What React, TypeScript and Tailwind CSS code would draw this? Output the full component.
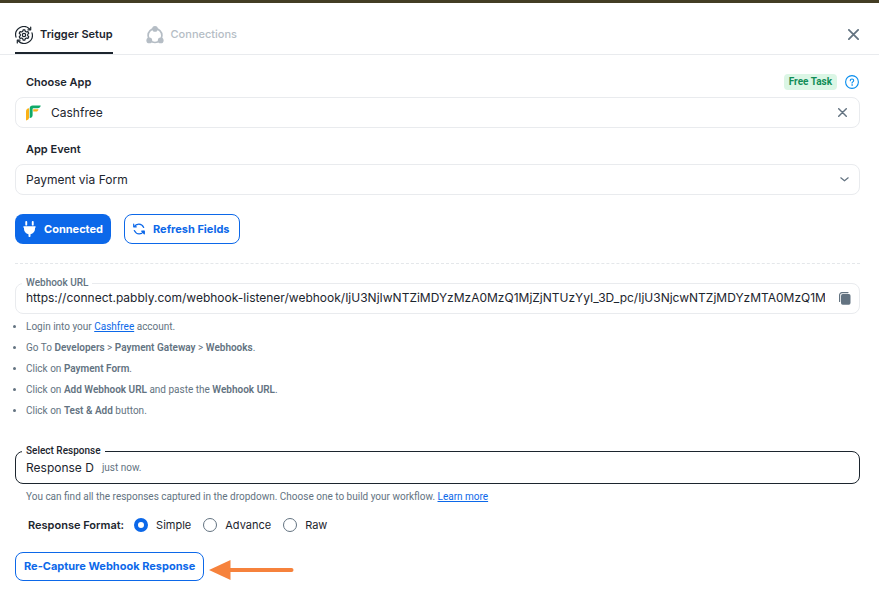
import { useState, type ReactNode } from "react"
import clsx from "clsx"

const WEBHOOK_URL =
  "https://connect.pabbly.com/webhook-listener/webhook/IjU3NjIwNTZiMDYzMzA0MzQ1MjZjNTUzYyI_3D_pc/IjU3NjcwNTZjMDYzMTA0MzQ1MjZkNTUzYyI_3D_pc"

const FORMATS = ["Simple", "Advance", "Raw"]

function TriggerIcon() {
  return (
    <svg viewBox="0 0 18 18" className="size-[18px]" fill="none" stroke="currentColor" strokeWidth="1.2" strokeLinecap="round" strokeLinejoin="round" aria-hidden="true">
      <path d="M1 11.2A8.2 8.2 0 0 1 14.6 3" />
      <path d="M17 6.8A8.2 8.2 0 0 1 3.4 15" />
      <path d="M15.7 1v2.8h-2.8" />
      <path d="M2.3 17v-2.8h2.8" />
      <path d="M8.1 3.9h1.8l.4 1.5 1.1.6 1.5-.4.9 1.6-1.1 1.1v1.4l1.1 1.1-.9 1.6-1.5-.4-1.1.6-.4 1.5H8.1l-.4-1.5-1.1-.6-1.5.4-.9-1.6 1.1-1.1V8.3L4.2 7.2l.9-1.6 1.5.4 1.1-.6z" />
      <circle cx="9" cy="9" r="1.7" />
    </svg>
  )
}

function ConnectionsIcon() {
  return (
    <svg viewBox="0 0 18 18" className="size-[18px]" fill="currentColor" aria-hidden="true">
      <circle cx="9" cy="9.6" r="6.9" fill="none" stroke="currentColor" strokeWidth="1.7" />
      <circle cx="9" cy="2.9" r="2.8" />
      <circle cx="3.3" cy="14.4" r="2.9" />
      <circle cx="14.7" cy="14.4" r="2.9" />
    </svg>
  )
}

function CrossIcon({ className }: { className: string }) {
  return (
    <svg viewBox="0 0 10 10" className={className} fill="none" stroke="currentColor" strokeWidth="1.6" strokeLinecap="round" aria-hidden="true">
      <path d="M.8.8l8.4 8.4M9.2.8L.8 9.2" />
    </svg>
  )
}

function CashfreeLogo() {
  return (
    <svg viewBox="0 0 15 16" className="h-4 w-[15px] shrink-0" aria-hidden="true">
      <path d="M3 3.3v9.2c0 1.6-1 2.7-3 2.9V6.6C0 4.7 1 3.5 3 3.3z" fill="#fbb117" />
      <path d="M7.2 4.3h5.3c-.3 1.5-1.2 2.3-2.7 2.3H7.2z" fill="#fbb117" />
      <path d="M14.7.5c-.3 1.9-1.3 2.7-3 2.7H7.3c-.5 0-.7.2-.7.7v6.3c0 1.6-1 2.5-2.9 2.8V3.5c0-2 1.1-3 3-3z" fill="#0fa968" />
    </svg>
  )
}

function PlugIcon() {
  return (
    <svg viewBox="0 0 13 16" className="h-4 w-[13px]" fill="currentColor" aria-hidden="true">
      <rect x="2.3" y="0" width="1.9" height="4.6" rx=".9" />
      <rect x="8.8" y="0" width="1.9" height="4.6" rx=".9" />
      <path d="M1 5.3h11c.5 0 .8.3.8.7s-.3.8-.8.8v1.3c0 2.6-1.7 4.6-4.5 5.2V15c0 .6-.4 1-1 1s-1-.4-1-1v-1.7C2.7 12.7 1 10.7 1 8.1V6.8C.5 6.8.2 6.4.2 6s.3-.7.8-.7z" />
    </svg>
  )
}

function RefreshIcon() {
  return (
    <svg viewBox="0 0 12 12" className="size-3" fill="none" stroke="currentColor" strokeWidth="1.2" strokeLinecap="round" strokeLinejoin="round" aria-hidden="true">
      <path d="M.7 1.2v2.6h2.6M1.2 3.7C3 .7 8.300-.6 10.700 4.400" />
      <path d="M10.800 8.300C9 11.300 3.700 12.600 1.300 7.600" />
      <path d="M11.300 10.800V8.200H8.700z" fill="currentColor" />
    </svg>
  )
}

function HelpIcon() {
  return (
    <svg viewBox="0 0 14 14" className="size-3.5" fill="none" stroke="currentColor" strokeLinecap="round" aria-hidden="true">
      <circle cx="7" cy="7" r="6.4" strokeWidth="1.1" />
      <path d="M5.3 5.7c0-1 .7-1.7 1.7-1.7s1.7.7 1.7 1.6c0 1.3-1.7 1.3-1.7 2.5" strokeWidth="1.1" />
      <circle cx="7" cy="10" r=".3" strokeWidth=".8" />
    </svg>
  )
}

function CopyIcon() {
  return (
    <svg viewBox="0 0 12 13" className="h-[13px] w-3" aria-hidden="true">
      <path d="M.6 9.5V3A2.4 2.4 0 0 1 3 .6h6" fill="none" stroke="currentColor" strokeWidth="1.2" strokeLinecap="round" />
      <rect x="2" y="2" width="9.5" height="10.8" rx="1.7" fill="currentColor" />
    </svg>
  )
}

function Notched({ legend, active, children }: { legend: ReactNode; active?: boolean; children: ReactNode }) {
  return (
    <fieldset className={clsx("min-w-0 rounded-lg border pl-1.5", active ? "border-[#1c252e]" : "border-[#e9ebee]")}>
      <legend className={clsx("px-1 font-['Roboto',sans-serif] text-[10px] leading-3 font-medium", active ? "text-[#1c252e]" : "text-[#637381]")}>
        {legend}
      </legend>
      {children}
    </fieldset>
  )
}

export default function App() {
  const [app, setApp] = useState("Cashfree")
  const [format, setFormat] = useState("Simple")

  return (
    <div className="bg-white font-['Inter','Liberation_Sans',sans-serif] text-xs text-[#1c252e]">
      <header className="flex h-[55px] items-stretch justify-between border-t-[3px] border-b border-t-[#433d24] border-b-[#e9ebee] pr-5 pl-[15px]">
        <nav className="flex gap-[33px]">
          <button type="button" className="flex items-center gap-[7px] border-b-2 border-[#1c252e] pt-3.5 text-[11px] font-semibold">
            <TriggerIcon />
            Trigger Setup
          </button>
          <button type="button" className="flex items-center gap-[7px] border-b-2 border-transparent pt-3.5 text-[11px] font-medium text-[#b5bdc5]">
            <ConnectionsIcon />
            Connections
          </button>
        </nav>
        <button type="button" aria-label="Close" className="pt-3 text-[#637381]">
          <CrossIcon className="size-[11px]" />
        </button>
      </header>

      <main className="pt-[18px] pr-[19px] pb-2 pl-[15px]">
        <div className="flex h-[18px] items-center justify-between pr-px pl-[11px]">
          <label htmlFor="app" className="text-[11px] font-semibold">
            Choose App
          </label>
          <div className="flex items-center gap-2">
            <span className="rounded-sm bg-[#dbf6e5] px-[5px] font-['Roboto',sans-serif] text-[10px] leading-4 font-bold text-[#118d57]">
              Free Task
            </span>
            <button type="button" aria-label="Help" className="text-[#078dee]">
              <HelpIcon />
            </button>
          </div>
        </div>
        <div className="mt-1.5 flex h-[31px] items-center gap-2.5 rounded-lg border border-[#e9ebee] pr-3 pl-2.5">
          <CashfreeLogo />
          <input
            id="app"
            value={app}
            onChange={(event) => setApp(event.target.value)}
            className="min-w-0 flex-1 outline-none"
          />
          <button type="button" aria-label="Clear" onClick={() => setApp("")} className="text-[#637381]">
            <CrossIcon className="size-[9px]" />
          </button>
        </div>

        <label htmlFor="event" className="mt-[11px] block pl-[11px] text-[11px] leading-5 font-semibold">
          App Event
        </label>
        <div className="mt-[5px] grid h-[31px] items-center rounded-lg border border-[#e9ebee]">
          <select id="event" className="col-start-1 row-start-1 h-full w-full appearance-none pl-2.5 outline-none">
            <option>Payment via Form</option>
          </select>
          <svg viewBox="0 0 9 5" className="pointer-events-none col-start-1 row-start-1 mr-2.5 h-[5px] w-[9px] justify-self-end text-[#637381]" fill="none" stroke="currentColor" strokeWidth="1.2" strokeLinecap="round" strokeLinejoin="round" aria-hidden="true">
            <path d="M.8.8l3.7 3 3.7-3" />
          </svg>
        </div>

        <div className="mt-[19px] flex gap-[13px] text-[11px] font-bold">
          <button type="button" className="flex h-[30px] items-center gap-2 rounded-lg bg-[#0c68e9] px-2 text-white">
            <PlugIcon />
            Connected
          </button>
          <button type="button" className="flex h-[30px] items-center gap-2 rounded-lg border border-[#0c68e9] pr-2.5 pl-2 text-[#0c68e9]">
            <RefreshIcon />
            Refresh Fields
          </button>
        </div>

        <hr className="mt-[19px] mb-[13px] border-dashed border-[#e4e7ea]" />

        <Notched legend={<label htmlFor="url">Webhook URL</label>}>
          <div className="flex h-6 items-center gap-3.5 pr-2 pb-1.5 pl-1">
            <input id="url" readOnly value={WEBHOOK_URL} className="min-w-0 flex-1 outline-none" />
            <button type="button" aria-label="Copy" className="text-[#637381]">
              <CopyIcon />
            </button>
          </div>
        </Notched>

        <ul className="mt-[2px] list-outside list-disc pl-[11px] font-['Roboto',sans-serif] text-[10px] leading-[21px] text-[#637381]">
          <li>
            Login into your{" "}
            <a href="#cashfree" className="text-[#0c68e9] underline">
              Cashfree
            </a>{" "}
            account.
          </li>
          <li>
            Go To <b className="font-semibold">Developers</b> &gt; <b className="font-semibold">Payment Gateway</b> &gt;{" "}
            <b className="font-semibold">Webhooks</b>.
          </li>
          <li>
            Click on <b className="font-semibold">Payment Form</b>.
          </li>
          <li>
            Click on <b className="font-semibold">Add Webhook URL</b> and paste the{" "}
            <b className="font-semibold">Webhook URL</b>.
          </li>
          <li>
            Click on <b className="font-semibold">Test &amp; Add</b> button.
          </li>
        </ul>

        <div className="mt-6">
          <Notched active legend={<span id="response-label">Select Response</span>}>
            <button
              type="button"
              aria-haspopup="listbox"
              aria-labelledby="response-label"
              className="flex h-[26px] w-full items-center gap-2 pb-[5px] pl-1 text-left"
            >
              Response D
              <span className="font-['Roboto',sans-serif] text-[10px] text-[#637381]">just now.</span>
            </button>
          </Notched>
        </div>
        <p className="mt-[5px] pl-[11px] font-['Roboto',sans-serif] text-[10px] leading-4 text-[#637381]">
          You can find all the responses captured in the dropdown. Choose one to build your workflow.{" "}
          <a href="#learn" className="text-[#0c68e9] underline">
            Learn more
          </a>
        </p>

        <div role="radiogroup" aria-labelledby="format-label" className="mt-2.5 flex h-5 items-center pl-[13px] text-[11px]">
          <span id="format-label" className="mr-2.5 font-semibold">
            Response Format:
          </span>
          {FORMATS.map((name) => (
            <label key={name} className="mr-3 flex items-center gap-2">
              <input
                type="radio"
                name="format"
                checked={format === name}
                onChange={() => setFormat(name)}
                className="size-3.5 appearance-none rounded-full border border-[#637381] checked:border-4 checked:border-[#0c68e9]"
              />
              {name}
            </label>
          ))}
        </div>

        <div className="mt-[17px] flex items-center gap-[5px]">
          <button type="button" className="h-[29px] rounded-lg border border-[#0c68e9] px-2 text-[11px] font-bold text-[#0c68e9]">
            Re-Capture Webhook Response
          </button>
          <svg viewBox="0 0 86 20" className="mt-1.5 h-5 w-[86px]" aria-hidden="true">
            <path d="M0 10L21.5 0v20z" fill="#f6823c" />
            <path d="M20 10h62.5" stroke="#f6823c" strokeWidth="4" strokeLinecap="round" />
          </svg>
        </div>
      </main>
    </div>
  )
}
